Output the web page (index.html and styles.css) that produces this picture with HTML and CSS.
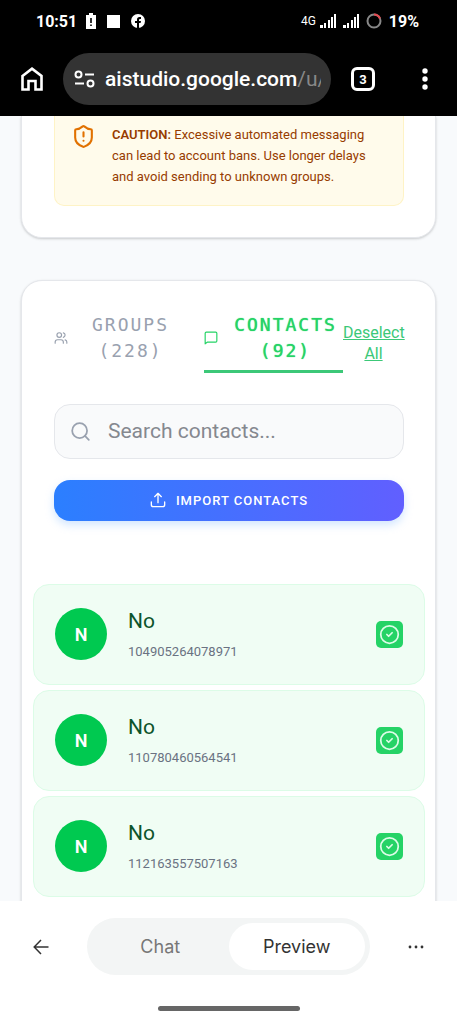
FILE: index.html
```html
<!DOCTYPE html>
<html lang="en">
<head>
<meta charset="utf-8">
<meta name="viewport" content="width=device-width, initial-scale=1">
<title>Contacts</title>
<link rel="stylesheet" href="styles.css">
</head>
<body>
<svg class="defs" aria-hidden="true">
  <symbol id="signal" viewBox="0 0 16 14"><path fill="#fff" d="M0 11h3v3H0zM4 9h2v5H4zM8 6h2v8H8zM11 3h2v11h-2zM14 0h2v14h-2z"/></symbol>
  <symbol id="check" viewBox="0 0 24 24"><circle cx="12" cy="12" r="10"/><path d="m9 12 2 2 4-4"/></symbol>
</svg>
<header class="chrome">
  <div class="status">
    <div class="status-group">
      <span class="clock">10:51</span>
      <svg width="10" height="16" viewBox="0 0 10 16"><path fill="#fff" d="M3 0h4v2h3v14H0V2h3z"/><path stroke="#000" stroke-width="1.6" d="M5 5v5M5 11.5v1.6"/></svg>
      <svg class="square" width="13" height="13" viewBox="0 0 13 13"><path fill="#fff" d="M0 0h13v13H0z"/></svg>
      <svg width="14" height="14" viewBox="0 0 14 14"><circle cx="7" cy="7" r="7" fill="#fff"/><path fill="#000" d="M6 14V9H4V7h2V5.600Q6 3 8.500 3H10v2H9Q8 5 8 6v1h2l-.4 2H8v5z"/></svg>
    </div>
    <div class="status-group status-right">
      <span class="network">4G</span>
      <svg width="16" height="14"><use href="#signal"/></svg>
      <svg width="16" height="14"><use href="#signal"/></svg>
      <svg class="ring" width="16" height="16" viewBox="0 0 16 16" fill="none" stroke-width="2"><circle cx="8" cy="8" r="6.500" stroke="#888"/><path stroke="#e34a50" d="M8 1.500a6.500 6.500 0 0 1 6 4"/></svg>
      <span class="clock">19%</span>
    </div>
  </div>
  <div class="toolbar">
    <button class="icon-btn" aria-label="Home"><svg width="22" height="24" viewBox="0 0 22 24" fill="none" stroke="#fff" stroke-width="2.600"><path d="M1.500 9 11 1.700 20.500 9v13.500h-6V14h-7v8.500h-6z"/></svg></button>
    <button class="address">
      <svg width="21" height="18" viewBox="0 0 21 18" fill="none" stroke="#fff" stroke-width="2"><circle cx="4.500" cy="4.500" r="3"/><path d="M11 4.500h9M1 13.500h9"/><circle cx="16.500" cy="13.500" r="3"/></svg>
      <span class="url">aistudio.google.com<span class="path">/u/</span></span>
    </button>
    <button class="icon-btn tabs-btn" aria-label="Open tabs">3</button>
    <button class="icon-btn" aria-label="Menu"><svg width="6" height="22" viewBox="0 0 6 22" fill="#fff"><circle cx="3" cy="3" r="2.700"/><circle cx="3" cy="11" r="2.700"/><circle cx="3" cy="19" r="2.700"/></svg></button>
  </div>
</header>

<main class="page">
  <section class="card card-top">
    <div class="caution">
      <svg width="25" height="25" viewBox="0 0 24 24" fill="none" stroke="#e17100" stroke-width="2" stroke-linecap="round" stroke-linejoin="round"><path d="M20 13c0 5-3.500 7.500-7.660 8.950a1 1 0 0 1-.67-.01C7.500 20.500 4 18 4 13V6a1 1 0 0 1 1-1c2 0 4.500-1.200 6.240-2.720a1.170 1.170 0 0 1 1.520 0C14.510 3.810 17 5 19 5a1 1 0 0 1 1 1z"/><path d="M12 8v4M12 16h.01"/></svg>
      <p><strong>CAUTION:</strong> Excessive automated messaging can lead to account bans. Use longer delays and avoid sending to unknown groups.</p>
    </div>
  </section>

  <section class="card">
    <div class="card-head">
      <div class="tabs">
        <button class="tab"><svg width="14" height="14" viewBox="0 0 24 24" class="line"><path d="M16 21v-2a4 4 0 0 0-4-4H6a4 4 0 0 0-4 4v2"/><circle cx="9" cy="7" r="4"/><path d="M22 21v-2a4 4 0 0 0-3-3.870M16 3.130a4 4 0 0 1 0 7.750"/></svg><span>GROUPS (228)</span></button>
        <button class="tab active"><svg width="14" height="14" viewBox="0 0 24 24" class="line"><path d="M22 17a2 2 0 0 1-2 2H6l-4 3V4a2 2 0 0 1 2-2h16a2 2 0 0 1 2 2z"/></svg><span>CONTACTS (92)</span></button>
      </div>
      <button class="deselect">Deselect All</button>
    </div>
    <label class="search">
      <svg width="21" height="21" viewBox="0 0 24 24" class="line"><circle cx="11" cy="11" r="8.500"/><path d="m21.500 21.500-4.400-4.400"/></svg>
      <input type="text" placeholder="Search contacts..." aria-label="Search contacts">
    </label>
    <button class="import"><svg width="16" height="16" viewBox="0 0 24 24" class="line"><path d="M2 15v4a3 3 0 0 0 3 3h14a3 3 0 0 0 3-3v-4M17 7l-5-5-5 5M12 2v14"/></svg>IMPORT CONTACTS</button>
    <ul class="contacts">
      <li class="contact"><span class="avatar">N</span><div class="info"><span class="name">No</span><span class="number">104905264078971</span></div><span class="check"><svg width="21" height="21" class="line"><use href="#check"/></svg></span></li>
      <li class="contact"><span class="avatar">N</span><div class="info"><span class="name">No</span><span class="number">110780460564541</span></div><span class="check"><svg width="21" height="21" class="line"><use href="#check"/></svg></span></li>
      <li class="contact"><span class="avatar">N</span><div class="info"><span class="name">No</span><span class="number">112163557507163</span></div><span class="check"><svg width="21" height="21" class="line"><use href="#check"/></svg></span></li>
    </ul>
  </section>
</main>

<footer class="bottom">
  <nav class="bottom-row">
    <button class="icon-btn" aria-label="Back"><svg width="16" height="16" viewBox="0 0 16 16" fill="none" stroke="#333" stroke-width="1.500"><path d="M15.500 8H1.500M8 1 1.200 8 8 15"/></svg></button>
    <div class="switch"><button>Chat</button><button class="on">Preview</button></div>
    <button class="icon-btn" aria-label="More"><svg width="16" height="4" viewBox="0 0 16 4" fill="#333"><circle cx="2" cy="2" r="1.400"/><circle cx="8" cy="2" r="1.400"/><circle cx="14" cy="2" r="1.400"/></svg></button>
  </nav>
  <div class="handle"></div>
</footer>
</body>
</html>
```
FILE: styles.css
```css
* { box-sizing: border-box; }
body {
  margin: 0;
  height: 100vh;
  display: flex;
  flex-direction: column;
  overflow: hidden;
  background: #fff;
  font-family: Roboto, "Liberation Sans", sans-serif;
}
button {
  margin: 0;
  padding: 0;
  border: 0;
  background: none;
  font: inherit;
  color: inherit;
}
svg { flex: none; }
.defs { position: absolute; width: 0; height: 0; }
.line {
  fill: none;
  stroke: currentColor;
  stroke-width: 2;
  stroke-linecap: round;
  stroke-linejoin: round;
}

.chrome { flex: none; background: #000; color: #fff; }
.status {
  display: flex;
  justify-content: space-between;
  height: 42px;
  padding: 0 38px 0 36px;
}
.status-group { display: flex; align-items: center; gap: 9px; }
.square { margin: 0 2px; }
.status-right { gap: 7px; }
.clock { font-size: 16px; font-weight: 700; }
.network { font-size: 12px; margin-right: -3px; }
.toolbar {
  display: flex;
  align-items: center;
  height: 74px;
  padding: 0 11px;
}
.icon-btn {
  flex: none;
  display: flex;
  align-items: center;
  justify-content: center;
  width: 42px;
  height: 42px;
}
.address {
  flex: 1;
  min-width: 0;
  display: flex;
  align-items: center;
  gap: 10px;
  height: 52px;
  margin: 0 20px 0 10px;
  padding: 0 10px 0 11px;
  border-radius: 26px;
  background: #333;
}
.url {
  flex: 1;
  min-width: 0;
  overflow: hidden;
  white-space: nowrap;
  text-align: left;
  font-size: 21px;
  line-height: 28px;
  font-weight: 500;
}
.path { color: #888; font-weight: 400; }
.tabs-btn {
  width: 24px;
  height: 24px;
  margin-right: 29px;
  border: 3px solid #fff;
  border-radius: 6px;
  font-size: 13px;
  font-weight: 700;
}

.page {
  flex: 1;
  min-height: 0;
  overflow: hidden;
  padding: 0 21px;
  background: #f8fafc;
}
.card {
  border: 1px solid #e5e7eb;
  border-radius: 21px;
  padding: 31px 31px 32px 32px;
  background: #fff;
  box-shadow: 0 1px 3px #0000001f, 0 1px 2px #00000014;
}
.card-top {
  margin-bottom: 42px;
  padding-top: 0;
  padding-bottom: 31px;
  border-top: 0;
  border-radius: 0 0 21px 21px;
}
.caution {
  display: flex;
  gap: 16px;
  padding: 8px 16px 18px;
  border: 1px solid #fef3c6;
  border-top: 0;
  border-radius: 0 0 10px 10px;
  background: #fffbeb;
  color: #973c00;
}
.caution p { margin: 0; font-size: 13px; line-height: 21px; }
.caution strong { font-weight: 600; }

.card-head { display: flex; align-items: center; }
.tabs { flex: 1; display: grid; grid-template-columns: 129fr 139fr; gap: 21px; }
.tab {
  display: flex;
  align-items: center;
  gap: 10px;
  padding-bottom: 6px;
  border-bottom: 3px solid transparent;
  color: #99a1af;
  font-family: "DejaVu Sans Mono", monospace;
  font-size: 18px;
  line-height: 26px;
  letter-spacing: 2px;
}
.tab span { flex: 1; }
.active { color: #25d366; border-color: #3cc878; }
.active span { text-shadow: 0 0 1px currentColor; }
.deselect {
  width: 61px;
  font-size: 16px;
  line-height: 21px;
  color: #3cc878;
  text-decoration: underline;
}
.search {
  display: flex;
  align-items: center;
  gap: 17px;
  height: 55px;
  margin-top: 31px;
  padding: 0 15px 1px;
  border: 1px solid #e5e7eb;
  border-radius: 16px;
  background: #f9fafb;
  color: #99a1af;
}
.search input {
  flex: 1;
  min-width: 0;
  padding: 0;
  border: 0;
  outline: 0;
  background: none;
  font: 21px Roboto, sans-serif;
}
.search input::placeholder { color: #85888f; }
.import {
  display: flex;
  align-items: center;
  justify-content: center;
  gap: 10px;
  width: 100%;
  height: 41px;
  margin: 21px 0 63px;
  padding-bottom: 1px;
  border-radius: 16px;
  background: linear-gradient(90deg, #2b7fff, #615fff);
  box-shadow: 0 4px 8px #bedbffb0;
  color: #fff;
  font-size: 13px;
  font-weight: 500;
  letter-spacing: 1px;
}
.contacts {
  display: grid;
  gap: 5px;
  margin: 0 -21px;
  padding: 0;
  list-style: none;
}
.contact {
  display: flex;
  align-items: center;
  height: 101px;
  padding: 0 21px 1px;
  border: 1px solid #dcfce7;
  border-radius: 16px;
  background: #f0fdf4;
}
.avatar {
  display: grid;
  place-items: center;
  width: 52px;
  height: 52px;
  margin-right: 21px;
  border-radius: 50%;
  background: #00c950;
  color: #fff;
  font-size: 18px;
  font-weight: 600;
}
.info { flex: 1; display: grid; gap: 5px; padding-bottom: 1px; }
.name { font-size: 21px; line-height: 32px; color: #0d542b; }
.number { font-size: 13px; line-height: 20px; color: #6a7282; }
.check {
  display: grid;
  place-items: center;
  width: 27px;
  height: 27px;
  border-radius: 5px;
  background: #25d366;
  color: #dcfce7;
}

.bottom { flex: none; background: #fff; padding: 17px 20px 13px; }
.bottom-row { display: flex; align-items: center; justify-content: space-between; }
.switch {
  display: grid;
  grid-template-columns: 1fr 1fr;
  flex: 1;
  height: 57px;
  margin: 0 25px;
  padding: 5px;
  border-radius: 29px;
  background: #f3f5f5;
  font-family: Inter, sans-serif;
  font-size: 18px;
  color: #777;
}
.on { border-radius: 24px; background: #fff; color: #333; }
.handle {
  width: 142px;
  height: 5px;
  margin: 31px auto 0;
  border-radius: 3px;
  background: #666;
}
```
